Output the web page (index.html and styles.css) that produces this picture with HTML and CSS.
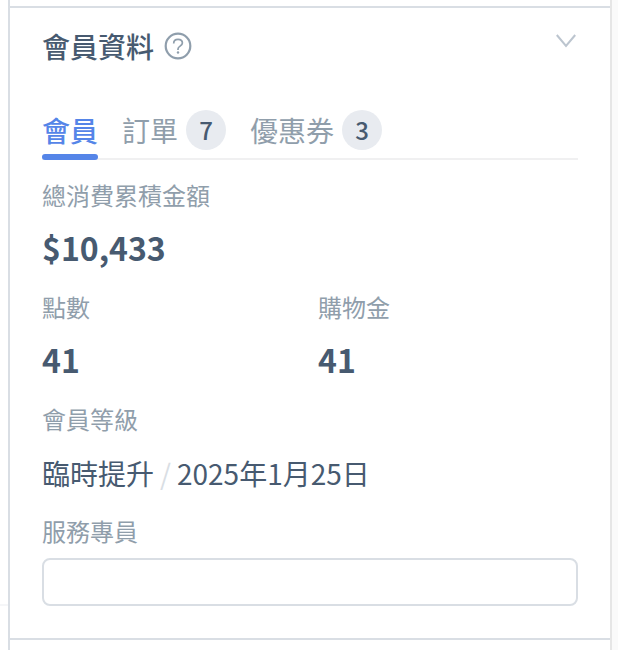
FILE: index.html
```html
<!DOCTYPE html>
<html lang="zh-Hant">
<head>
<meta charset="utf-8">
<meta name="viewport" content="width=device-width, initial-scale=1">
<title>會員資料</title>
<link rel="stylesheet" href="styles.css">
</head>
<body>
<div class="workspace">
  <div class="chat-edge"><div class="composer-edge"></div></div>
  <main class="panel">
    <section class="member">
      <header class="member-header">
        <h1 class="title">會員資料</h1>
        <button class="icon-button" type="button" aria-label="說明">
          <svg width="28" height="28" viewBox="0 0 28 28" fill="none" stroke="currentColor">
            <circle cx="14" cy="14" r="12.3" stroke-width="2.2"/>
            <path d="M9.7 11.4C9.7 8.8 11.4 7.3 14 7.3s4.4 1.5 4.4 3.8c0 2.9-4.4 3.2-4.4 5.8v1" stroke-width="1.7"/>
            <circle cx="14" cy="20.5" r="1.2" fill="currentColor" stroke="none"/>
          </svg>
        </button>
        <button class="icon-button collapse" type="button" aria-label="收合">
          <svg width="24" height="16" viewBox="0 0 24 16" fill="none" stroke="currentColor" stroke-width="2">
            <path d="M2.8 2L12 13 21.2 2"/>
          </svg>
        </button>
      </header>
      <nav class="tabs">
        <button class="tab tab-active" type="button">會員</button>
        <button class="tab" type="button">訂單<span class="badge">7</span></button>
        <button class="tab" type="button">優惠券<span class="badge">3</span></button>
      </nav>
      <dl class="facts">
        <div class="fact fact-wide">
          <dt class="label">總消費累積金額</dt>
          <dd class="value">$10,433</dd>
        </div>
        <div class="fact">
          <dt class="label">點數</dt>
          <dd class="value">41</dd>
        </div>
        <div class="fact">
          <dt class="label">購物金</dt>
          <dd class="value">41</dd>
        </div>
        <div class="fact fact-wide">
          <dt class="label">會員等級</dt>
          <dd class="value value-level"><span>臨時提升</span><span class="slash">/</span><span>2025年1月25日</span></dd>
        </div>
      </dl>
      <div class="field">
        <label class="label" for="agent">服務專員</label>
        <input class="text-input" id="agent" type="text">
      </div>
    </section>
  </main>
  <div class="gutter"></div>
</div>
</body>
</html>
```
FILE: styles.css
```css
* {
  box-sizing: border-box;
}

body {
  margin: 0;
  background: #fff;
  color: #475a70;
  font-family: "Noto Sans CJK TC", sans-serif;
  font-size: 28px;
}

button,
input {
  font: inherit;
}

.workspace {
  display: flex;
  min-height: 100vh;
}

.chat-edge {
  width: 8px;
}

.composer-edge {
  height: 606px;
  border-bottom: 2px solid #f5f6f8;
}

.panel {
  flex: 1;
  padding-top: 6px;
  border-left: 2px solid #d9dee4;
  border-right: 2px solid #e6e6e6;
}

.gutter {
  width: 6px;
  background: #fafafa;
}

.member {
  padding: 16px 32px 32px;
  border-top: 2px solid #d9dee4;
  border-bottom: 2px solid #d9dee4;
}

.member-header {
  display: flex;
  align-items: center;
  gap: 10px;
  height: 44px;
}

.title {
  margin: 0;
  font-size: 28px;
  font-weight: 500;
  line-height: 44px;
}

.icon-button {
  display: flex;
  padding: 0;
  border: 0;
  background: none;
  color: #8f9eac;
}

.collapse {
  align-self: flex-start;
  margin-top: 9px;
  margin-left: auto;
  color: #bcc5cf;
}

.tabs {
  display: flex;
  gap: 24px;
  margin-top: 36px;
  border-bottom: 2px solid #f0f0f1;
}

.tab {
  position: relative;
  display: flex;
  align-items: center;
  gap: 8px;
  height: 54px;
  padding: 0 0 2px;
  border: 0;
  background: none;
  color: #909eab;
  line-height: 40px;
}

.tab-active {
  color: #5585e8;
  font-weight: 500;
}

.tab-active::after {
  content: "";
  position: absolute;
  right: 0;
  bottom: -2px;
  left: 0;
  height: 6px;
  border-radius: 3px;
  background: #5585e8;
}

.badge {
  width: 40px;
  height: 40px;
  border-radius: 50%;
  background: #e8ebf0;
  color: #475a70;
  font-size: 24px;
  font-weight: 500;
  line-height: 40px;
  text-align: center;
}

.facts {
  display: grid;
  grid-template-columns: 1fr 1fr;
  gap: 16px;
  margin: 17px 0 16px;
}

.fact-wide {
  grid-column: 1 / -1;
}

.label {
  display: block;
  color: #909eab;
  font-size: 24px;
  line-height: 36px;
}

.value {
  margin: 10px 0 0;
  padding-bottom: 2px;
  font-size: 32px;
  font-weight: 700;
  line-height: 48px;
}

.value-level {
  display: flex;
  gap: 6px;
  margin-top: 12px;
  padding-bottom: 0;
  font-size: 28px;
  font-weight: 400;
}

.slash {
  color: #d9dee4;
}

.text-input {
  display: block;
  width: 100%;
  height: 48px;
  margin-top: 9px;
  padding: 0 16px;
  border: 2px solid #d9dee4;
  border-radius: 8px;
  background: #fff;
  color: inherit;
  font-size: 24px;
}
```
